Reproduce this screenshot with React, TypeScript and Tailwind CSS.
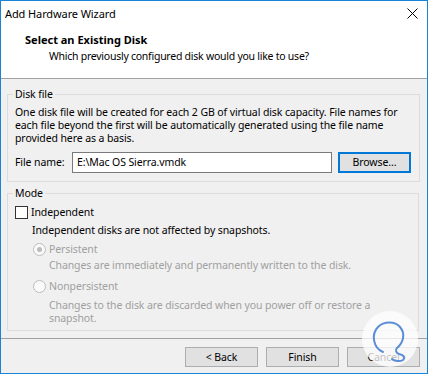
const font = { fontFamily: '"Noto Sans", "Open Sans", sans-serif' }

function Radio({ checked }: { checked?: boolean }) {
  return (
    <span className="w-[13px] h-[13px] rounded-full border border-[#bcbcbc] bg-[#fafafa] flex items-center justify-center shrink-0">
      {checked && <span className="w-[5px] h-[5px] rounded-full bg-[#bcbcbc]" />}
    </span>
  )
}

function Button({ children, focused }: { children: React.ReactNode; focused?: boolean }) {
  return (
    <button
      className={
        focused
          ? 'w-[73px] h-[21px] border-2 border-[#0078d7] bg-[#e1e1e1] text-[10.5px] leading-[13px] text-black'
          : 'w-[73px] h-[20px] border border-[#adadad] bg-[#e1e1e1] text-[10.5px] leading-[13px] text-black'
      }
    >
      {children}
    </button>
  )
}

export default function App() {
  return (
    <div
      className="relative w-[428px] h-[374px] border border-[#1883d7] bg-[#f0f0f0] flex flex-col overflow-hidden text-black tracking-[-0.25px]"
      style={font}
    >
      {/* title bar + header */}
      <div className="bg-white border-b border-[#a0a0a0]">
        <div className="h-[25px] flex items-center justify-between pl-[4px] pr-[9px]">
          <span className="text-[11px] leading-[16px] tracking-[-0.1px]">Add Hardware Wizard</span>
          <svg width="11" height="11" viewBox="0 0 11 11">
            <path d="M0.5 0.5 L10.5 10.5 M10.5 0.5 L0.5 10.5" stroke="#000" strokeWidth="1" />
          </svg>
        </div>
        <div className="pl-[24px] pt-[7px] h-[52px]">
          <div className="text-[11px] leading-[14px] font-bold tracking-normal">Select an Existing Disk</div>
          <div className="pl-[24px] mt-[2px] text-[10.5px] leading-[14px]">
            Which previously configured disk would you like to use?
          </div>
        </div>
      </div>

      {/* body */}
      <div className="pt-[9px] text-[10.5px] leading-[13px] tracking-[-0.1px]">
        <fieldset className="ml-[6px] mr-[8px] border border-[#dcdcdc] pl-[7px] pr-[8px] pt-[5px] pb-[8px]">
          <legend className="px-[2px] -ml-[2px]">Disk file</legend>
          <p>
            One disk file will be created for each 2 GB of virtual disk capacity. File names for
            <br />
            each file beyond the first will be automatically generated using the file name
            <br />
            provided here as a basis.
          </p>
          <div className="mt-[7px] flex items-center">
            <span className="w-[57px]">File name:</span>
            <div className="w-[260px] h-[21px] border border-[#7a7a7a] bg-white flex items-center pl-[4px]">
              E:\Mac OS Sierra.vmdk
            </div>
            <div className="ml-[6px]">
              <Button focused>Browse...</Button>
            </div>
          </div>
        </fieldset>

        <fieldset className="mt-[5px] ml-[6px] mr-[8px] border border-[#dcdcdc] pl-[7px] pr-[8px] pt-[6px] pb-[5px]">
          <legend className="px-[2px] -ml-[2px]">Mode</legend>
          <div className="flex items-center gap-[3px]">
            <span className="w-[13px] h-[13px] border border-[#333] bg-white shrink-0" />
            <span>Independent</span>
          </div>
          <p className="mt-[5px] pl-[17px]">Independent disks are not affected by snapshots.</p>
          <div className="pl-[18px] text-[#a0a0a0]">
            <div className="mt-[6px] flex items-center gap-[3px]">
              <Radio checked />
              <span>Persistent</span>
            </div>
            <p className="mt-[3px] pl-[16px]">Changes are immediately and permanently written to the disk.</p>
            <div className="mt-[8px] flex items-center gap-[3px]">
              <Radio />
              <span>Nonpersistent</span>
            </div>
            <p className="mt-[6px] pl-[16px]">
              Changes to the disk are discarded when you power off or restore a
              <br />
              snapshot.
            </p>
          </div>
        </fieldset>

        <div className="mt-[7px] border-t border-[#a0a0a0]" />
        <div className="mt-[8px] flex justify-end gap-[8px] pr-[7px]">
          <Button>&lt; Back</Button>
          <Button>Finish</Button>
          <Button>Cancel</Button>
        </div>
      </div>

      {/* watermark */}
      <svg className="absolute left-[360px] top-[309px]" width="58" height="58" viewBox="0 0 58 58">
        <circle cx="29" cy="29" r="28" fill="#ffffff" fillOpacity="0.75" />
        <path
          d="M22 42 C12 38 10 24 17 17 C23 11 34 11 39 17 C45 24 42 33 36 38 C34 40 35 43 38 44 C42 45 45 47 42 50 C39 52 33 51 31 49"
          fill="none"
          stroke="#5b8ed6"
          strokeWidth="2"
          strokeLinecap="round"
        />
      </svg>
    </div>
  )
}
